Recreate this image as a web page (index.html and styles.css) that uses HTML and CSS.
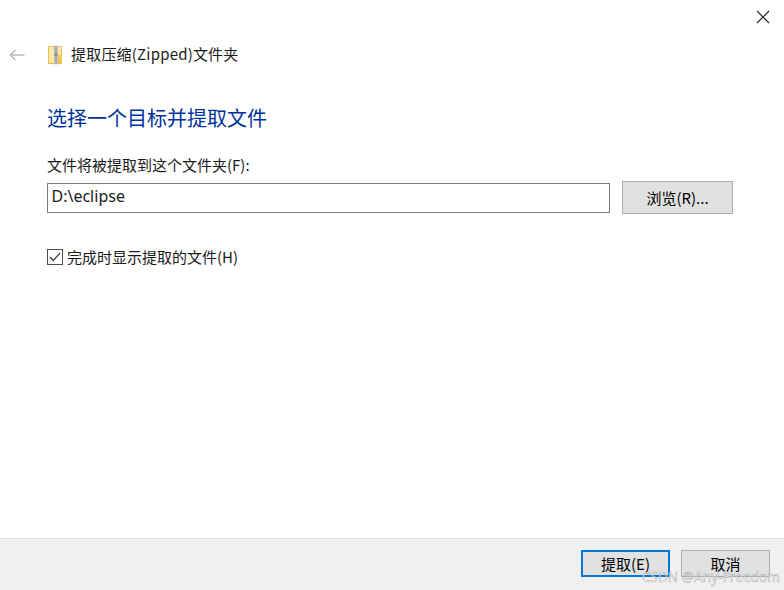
FILE: index.html
```html
<!DOCTYPE html>
<html lang="zh-CN">
<head>
<meta charset="utf-8">
<title>提取压缩(Zipped)文件夹</title>
<link rel="stylesheet" href="styles.css">
</head>
<body>
<div class="dialog">
  <div class="closebar">
    <button class="close" aria-label="关闭">
      <svg width="14" height="14" viewBox="0 0 14 14"><path d="M1 1 L13 13 M13 1 L1 13" stroke="#1a1a1a" stroke-width="1.1" fill="none"/></svg>
    </button>
  </div>
  <div class="titlebar">
    <svg class="back" width="16" height="12" viewBox="0 0 16 12"><path d="M15.5 6 H1.5 M6.5 1 L1.5 6 L6.5 11" stroke="#bcbcbc" stroke-width="1.7" fill="none"/></svg>
    <svg class="zip" width="16" height="20" viewBox="0 0 16 20">
      <path d="M1.5 1.5 H14.5 V18.5 H1.5 Z" fill="#fce9a8" stroke="#e8c35a"/>
      <path d="M11 10 H14.5 V18.5 H11 Z" fill="#f2c94f"/>
      <path d="M1.5 18.5 H14.5" stroke="#e2b93f"/>
      <rect x="7" y="0.5" width="4" height="19" fill="#d4d4d4"/>
      <path d="M7.5 2 H10.5 M7.5 4 H10.5 M7.5 6 H10.5 M7.5 12 H10.5 M7.5 14 H10.5 M7.5 16 H10.5 M7.5 18 H10.5" stroke="#7d7d7d" stroke-width="0.9"/>
      <rect x="7.5" y="7.5" width="3" height="3.5" fill="#8d8d8d"/>
    </svg>
    <span class="title">提取压缩(Zipped)文件夹</span>
  </div>
  <main class="content">
    <h1 class="heading">选择一个目标并提取文件</h1>
    <label class="field-label">文件将被提取到这个文件夹(F):</label>
    <div class="path-row">
      <div class="path-input">D:\eclipse</div>
      <button class="btn browse">浏览(R)...</button>
    </div>
    <div class="check-row">
      <span class="checkbox">
        <svg width="12" height="10" viewBox="0 0 12 10"><path d="M1 5 L4.3 8.5 L11 1" stroke="#3c3c3c" stroke-width="1.2" fill="none"/></svg>
      </span>
      <span class="check-label">完成时显示提取的文件(H)</span>
    </div>
  </main>
  <footer class="footer">
    <button class="btn action primary">提取(E)</button>
    <button class="btn action">取消</button>
  </footer>
  <div class="watermark">CSDN @Any-Freedom</div>
</div>
</body>
</html>
```
FILE: styles.css
```css
* { box-sizing: border-box; }
html, body { margin: 0; padding: 0; background: #fff; }
body {
  font-family: "Noto Sans CJK SC", "Noto Sans", sans-serif;
  font-size: 15px;
  color: #1a1a1a;
}
.dialog {
  position: relative;
  width: 784px;
  height: 590px;
  display: flex;
  flex-direction: column;
  overflow: hidden;
}
.closebar {
  display: flex;
  justify-content: flex-end;
  padding: 10px 14px 0 0;
  height: 44px;
}
.close {
  width: 14px;
  height: 14px;
  padding: 0;
  border: 0;
  background: none;
  display: block;
}
.close svg { display: block; }
.titlebar {
  display: flex;
  align-items: center;
  height: 22px;
  padding-left: 9px;
}
.back { margin-right: 22px; }
.zip { margin-right: 8px; }
.title { font-size: 15px; line-height: 20px; margin-top: -2px; letter-spacing: 0.2px; color: #1a1a1a; }
.content {
  flex: 1;
  padding: 0 51px 0 47px;
  display: flex;
  flex-direction: column;
}
.heading {
  margin: 38px 0 0;
  font-size: 20px;
  font-weight: 400;
  line-height: 28px;
  color: #003399;
}
.field-label {
  margin-top: 23px;
  line-height: 20px;
  height: 20px;
}
.path-row {
  display: flex;
  align-items: center;
  gap: 12px;
  margin-top: 6px;
}
.path-input {
  flex: 1;
  height: 30px;
  border: 1px solid #7a7a7a;
  padding-left: 3.5px;
  line-height: 25px;
  font-family: "Noto Sans", "Noto Sans CJK SC", sans-serif;
  font-size: 16px;
  color: #1a1a1a;
}
.btn {
  font: inherit;
  font-size: 15px;
  color: #000;
  background: #e1e1e1;
  border: 1px solid #adadad;
  padding: 0;
  border-radius: 0;
}
.browse { width: 111px; height: 33px; }
.check-row {
  display: flex;
  align-items: center;
  gap: 4px;
  margin-top: 33px;
}
.checkbox {
  width: 16px;
  height: 16px;
  border: 1px solid #4d4d4d;
  display: flex;
  align-items: center;
  justify-content: center;
  background: #fff;
}
.check-label { line-height: 18px; margin-top: 1px; }
.footer {
  height: 52px;
  background: #f0f0f0;
  border-top: 1px solid #dfdfdf;
  display: flex;
  justify-content: flex-end;
  align-items: flex-start;
  gap: 11px;
  padding: 11px 14px 0 0;
}
.action { width: 89px; height: 27px; }
.primary { border: 2px solid #0078d7; }
.watermark {
  position: absolute;
  right: 4px;
  top: 568px;
  font-family: "Noto Sans", sans-serif;
  font-size: 13.5px;
  line-height: 18px;
  color: rgba(255, 255, 255, 0.75);
  -webkit-text-stroke: 0.45px rgba(120, 120, 120, 0.7);
  letter-spacing: 0.1px;
}
```
